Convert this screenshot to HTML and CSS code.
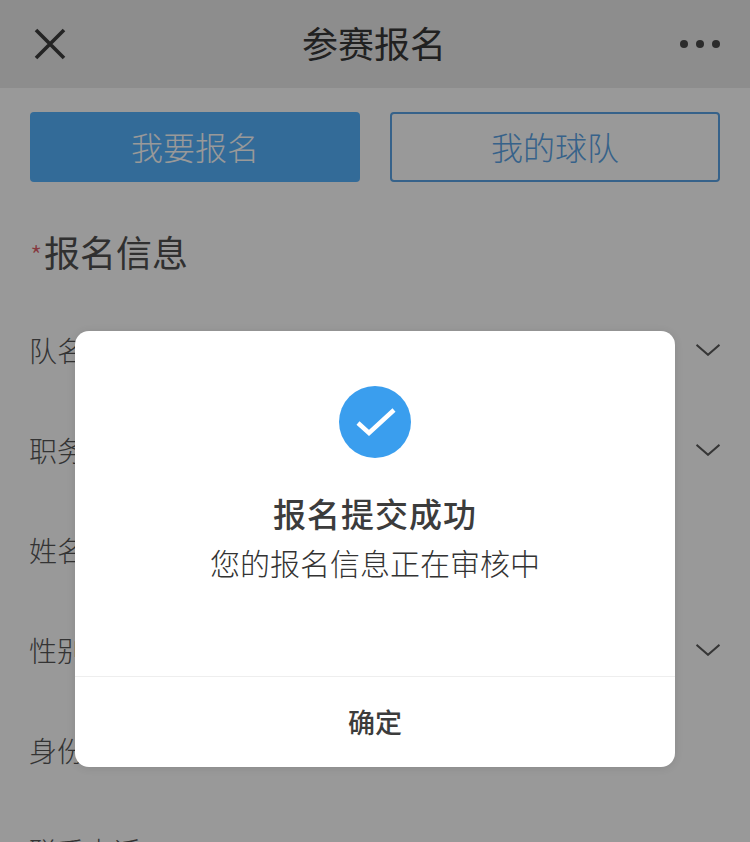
FILE: index.html
```html
<!DOCTYPE html>
<html lang="zh">
<head>
<meta charset="utf-8">
<title>参赛报名</title>
<link rel="stylesheet" href="styles.css">
</head>
<body>
<div class="page">
  <header class="nav">
    <svg class="nav-close" width="32" height="32" viewBox="0 0 32 32"><path d="M2 2 L30 30 M30 2 L2 30" fill="none" stroke="#3c3c3c" stroke-width="3.6"/></svg>
    <h1 class="nav-title">参赛报名</h1>
    <svg class="nav-more" width="40" height="10" viewBox="0 0 40 10"><circle cx="4" cy="5" r="4" fill="#4a4a4a"/><circle cx="20" cy="5" r="4" fill="#4a4a4a"/><circle cx="36" cy="5" r="4" fill="#4a4a4a"/></svg>
  </header>
  <main class="content">
    <div class="tabs">
      <div class="tab tab-active">我要报名</div>
      <div class="tab tab-outline">我的球队</div>
    </div>
    <h2 class="section"><span class="star">*</span>报名信息</h2>
    <div class="form">
      <div class="row"><span>队名</span><svg class="chev" width="24" height="12" viewBox="0 0 24 12"><path d="M0.5 0.8 L12 10.8 L23.5 0.8" fill="none" stroke="#5a5a5a" stroke-width="2"/></svg></div>
      <div class="row"><span>职务</span><svg class="chev" width="24" height="12" viewBox="0 0 24 12"><path d="M0.5 0.8 L12 10.8 L23.5 0.8" fill="none" stroke="#5a5a5a" stroke-width="2"/></svg></div>
      <div class="row"><span>姓名</span></div>
      <div class="row"><span>性别</span><svg class="chev" width="24" height="12" viewBox="0 0 24 12"><path d="M0.5 0.8 L12 10.8 L23.5 0.8" fill="none" stroke="#5a5a5a" stroke-width="2"/></svg></div>
      <div class="row"><span>身份证</span></div>
      <div class="row row-phone"><span class="label-phone">联系电话</span><span class="placeholder">请输入号码</span></div>
    </div>
  </main>
  <div class="mask">
    <div class="modal">
      <div class="modal-body">
        <svg class="ok" width="72" height="72" viewBox="0 0 72 72"><circle cx="36" cy="36" r="36" fill="#3a9eee"/><path d="M19 37 L30 47 L55 24" fill="none" stroke="#fff" stroke-width="4.5"/></svg>
        <div class="modal-title">报名提交成功</div>
        <div class="modal-text">您的报名信息正在审核中</div>
      </div>
      <div class="modal-btn">确定</div>
    </div>
  </div>
</div>
</body>
</html>
```
FILE: styles.css
```css
* { box-sizing: border-box; }
html, body { margin: 0; padding: 0; }
body { font-family: "Noto Sans CJK SC", "Noto Sans", sans-serif; background: #fff; }
.page { position: relative; width: 750px; height: 842px; overflow: hidden; background: #fff; color: #333; }
.nav { height: 88px; background: #ebebeb; display: flex; align-items: center; justify-content: space-between; padding: 0 30px 4px 34px; }
.nav-title { margin: 0; font-size: 36px; font-weight: 400; color: #383838; line-height: 1; position: relative; left: 1px; }
.nav-close { display: block; margin-top: 4px; }
.nav-more { display: block; margin-top: 4px; }
.content { padding: 24px 30px 0; }
.tabs { display: grid; grid-template-columns: 1fr 1fr; gap: 30px; }
.tab { height: 70px; border-radius: 4px; display: flex; align-items: center; justify-content: center; font-size: 32px; font-weight: 300; padding-bottom: 2px; }
.tab-active { background: #55b2fd; color: #fff; }
.tab-outline { border: 2px solid #5aa3e6; color: #5aa3e6; }
.section { margin: 46px 0 0; font-size: 36px; font-weight: 400; line-height: 46px; color: #505050; display: flex; }
.star { color: #e0606a; font-size: 28px; width: 14px; font-weight: 300; line-height: 54px; }
.form { margin-top: 18px; }
.row { height: 100px; display: flex; align-items: center; justify-content: space-between; font-size: 28px; font-weight: 300; color: #555; margin-left: -1px; }
.row-phone { justify-content: flex-start; padding-top: 1px; }
.label-phone { width: 163px; }
.placeholder { color: #999; font-size: 22px; letter-spacing: 29px; }
.mask { position: absolute; inset: 0; background: rgba(0, 0, 0, 0.4); padding: 331px 75px 0; }
.modal { background: #fff; border-radius: 14px; height: 436px; display: flex; flex-direction: column; box-shadow: 0 1px 8px rgba(0, 0, 0, 0.1); }
.modal-body { height: 346px; display: flex; flex-direction: column; align-items: center; padding-top: 55px; border-bottom: 1px solid #eee; }
.ok { display: block; }
.modal-title { margin-top: 32px; font-size: 33px; font-weight: 500; letter-spacing: 1px; line-height: 46px; color: #3c3c3c; }
.modal-text { margin-top: 5px; font-size: 30px; font-weight: 300; line-height: 42px; color: #333; }
.modal-btn { flex: 1; display: flex; align-items: center; justify-content: center; font-size: 27px; font-weight: 500; color: #3c3c3c; padding-bottom: 1px; }
```
